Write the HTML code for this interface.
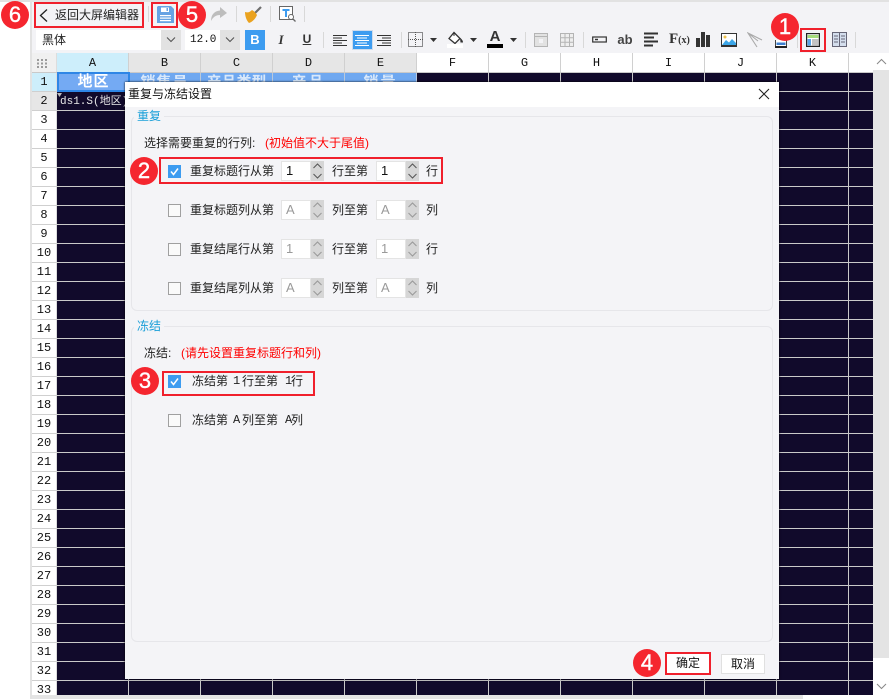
<!DOCTYPE html>
<html lang="zh">
<head>
<meta charset="utf-8">
<title>重复与冻结设置</title>
<style>
html,body{margin:0;padding:0;width:889px;height:699px;overflow:hidden;background:#fff}
body{position:relative;font-family:"Liberation Sans","Noto Sans CJK SC",sans-serif;font-size:12px;color:#222}
.a,.t,.box,.badge,.sep,.cb,.inp,.spin,.h,.r{position:absolute}
.t{white-space:nowrap;line-height:18px;height:18px}
.box{border:2px solid #f0202c;box-sizing:border-box}
.badge{width:28px;height:28px;border-radius:50%;background:#f5262f;color:#fff;text-align:center;font:22px/28px "Liberation Sans",sans-serif;-webkit-text-stroke:.4px #fff}
.sep{width:1px;background:#d8d8d8;height:16px}
.h{top:53px;height:19px;width:71px;border-right:1px solid #d0d0d0;font:12px/20px "Liberation Mono",monospace;text-align:center;color:#111;background:#fff}
.g{background:#e6e6e6}
.r{left:32px;width:24px;height:18px;border-bottom:1px solid #cfcfcf;border-right:1px solid #ddd;font:12px/19px "Liberation Mono",monospace;text-align:center;background:#fff;color:#111}
.cb{left:168px;width:11px;height:11px;border:1px solid #a0a0a0;background:#fafafa}
.cb.on{width:13px;height:13px;border:0;background:#3d9cf0}
.inp{width:30px;height:20px;background:#fff;border:1px solid #e4e4e4;box-sizing:border-box;font:13px/18px "Liberation Sans",sans-serif;padding-left:4px;color:#111}
.dis{color:#9a9a9a}
.spin{width:13px;height:20px;background:#d6d6d6}
.mono{font-family:"Liberation Mono",monospace;font-size:12px}
</style>
</head>
<body>
<div class="a" style="left:0;top:0;width:889px;height:2px;background:#e2e2e2"></div>
<div class="a" style="left:30px;top:0;width:2px;height:699px;background:#e2e2e2"></div>
<div class="a" style="left:32px;top:2px;width:857px;height:51px;background:#f3f3f6"></div>

<!-- top toolbar -->
<svg class="a" style="left:38px;top:8px" width="11" height="15" viewBox="0 0 11 15"><path d="M9 1.500 L2.500 7.500 L9 13.500" fill="none" stroke="#222" stroke-width="1.300"/></svg>
<div class="t" style="left:55px;top:6px;font-size:12px;letter-spacing:0">返回大屏编辑器</div>
<div class="sep" style="left:148px;top:6px"></div>
<svg class="a" style="left:157px;top:6px" width="17" height="17" viewBox="0 0 17 17"><path d="M1 0H14L17 3V17H0V1Z" fill="#66a3e3"/><rect x="4" y="1.500" width="8" height="4.500" fill="#fff"/><rect x="9.500" y="2" width="1.500" height="3" fill="#66a3e3"/><rect x="3" y="9" width="11" height="1.200" fill="#fff"/><rect x="3" y="11.500" width="11" height="1.200" fill="#fff"/><rect x="3" y="14" width="11" height="1.200" fill="#fff"/></svg>
<svg class="a" style="left:210px;top:7px" width="17" height="15" viewBox="0 0 17 15"><path d="M10 0L17 6L10 11V8C6 8 3 10 1 14C1 8 4 4 10 3.500Z" fill="#bdbdbd"/></svg>
<div class="sep" style="left:236px;top:6px"></div>
<svg class="a" style="left:244px;top:5px" width="18" height="18" viewBox="0 0 18 18"><path d="M17 2L11 8" stroke="#6f6f6f" stroke-width="2.200"/><path d="M8 5C10 6 12 8 13 10C11 15 7 17.500 5 18C3 16 1 12 1 7C4 8 6 7 8 5Z" fill="#eaa21f"/></svg>
<div class="sep" style="left:270px;top:6px"></div>
<svg class="a" style="left:279px;top:6px" width="17" height="16" viewBox="0 0 17 16"><rect x=".5" y=".5" width="13" height="13" fill="#fff" stroke="#666"/><path d="M3.500 3H10.500V5H8V11H6V5H3.500Z" fill="#3d9cf0"/><circle cx="12" cy="11" r="2.500" fill="#fff" stroke="#666"/><path d="M14 13L16.500 15.500" stroke="#666" stroke-width="1.300"/></svg>
<div class="sep" style="left:304px;top:6px"></div>

<!-- second toolbar -->
<div class="a" style="left:36px;top:30px;width:125px;height:20px;background:#fff"></div>
<div class="t" style="left:42px;top:31px;font-size:12px">黑体</div>
<div class="a" style="left:161px;top:30px;width:20px;height:20px;background:#e2e2e2"></div>
<svg class="a" style="left:165px;top:36px" width="12" height="8" viewBox="0 0 12 8"><path d="M2 1.500L6 5.500L10 1.500" fill="none" stroke="#555" stroke-width="1.100"/></svg>
<div class="a" style="left:185px;top:30px;width:35px;height:20px;background:#fff"></div>
<div class="t" style="left:190px;top:31px;font:11px/18px 'Liberation Mono',monospace;color:#111">12.0</div>
<div class="a" style="left:220px;top:30px;width:20px;height:20px;background:#e2e2e2"></div>
<svg class="a" style="left:224px;top:36px" width="12" height="8" viewBox="0 0 12 8"><path d="M2 1.500L6 5.500L10 1.500" fill="none" stroke="#555" stroke-width="1.100"/></svg>
<div class="a" style="left:245px;top:30px;width:20px;height:20px;background:#3d9cf0;color:#fff;text-align:center;font:bold 13px/20px 'Liberation Sans',sans-serif">B</div>
<div class="a" style="left:274px;top:30px;width:14px;height:20px;color:#333;text-align:center;font:italic bold 13px/20px 'Liberation Serif',serif">I</div>
<div class="a" style="left:300px;top:30px;width:14px;height:18px;color:#333;text-align:center;font:bold 12px/18px 'Liberation Sans',sans-serif;text-decoration:underline">U</div>
<div class="sep" style="left:323px;top:32px"></div>

<svg class="a" style="left:333px;top:35px" width="14" height="11" viewBox="0 0 14 11"><path d="M0 .5H14M0 3H9M0 5.500H14M0 8H9M0 10.500H14" stroke="#333" stroke-width="1"/></svg>
<div class="a" style="left:352px;top:30px;width:21px;height:20px;background:#3d9cf0;border:1px solid #cfdcec;box-sizing:border-box"></div>
<svg class="a" style="left:355px;top:35px" width="14" height="11" viewBox="0 0 14 11"><path d="M0 .5H14M2 3H12M0 5.500H14M2 8H12M0 10.500H14" stroke="#fff" stroke-width="1"/></svg>
<svg class="a" style="left:377px;top:35px" width="14" height="11" viewBox="0 0 14 11"><path d="M0 .5H14M5 3H14M0 5.500H14M5 8H14M0 10.500H14" stroke="#333" stroke-width="1"/></svg>
<div class="sep" style="left:401px;top:32px"></div>
<svg class="a" style="left:408px;top:32px" width="15" height="15" viewBox="0 0 15 15" shape-rendering="crispEdges"><rect x=".5" y=".5" width="14" height="14" fill="none" stroke="#222" stroke-dasharray="1 1"/><path d="M7.500 0V15M0 7.500H15" stroke="#555" stroke-dasharray="1 1"/></svg>
<svg class="a" style="left:430px;top:38px" width="7" height="4" viewBox="0 0 7 4"><path d="M0 0H7L3.500 4Z" fill="#333"/></svg>
<svg class="a" style="left:447px;top:31px" width="17" height="17" viewBox="0 0 17 17"><path d="M7 1.500L13 7.500L8 12.500L2 7.500Z" fill="#fff" stroke="#333" stroke-width="1.300"/><path d="M7 1V5" stroke="#333"/><path d="M13 7C15 8 16 10 16 11.500L13.500 11.500Z" fill="#333"/><rect x="0" y="13" width="16" height="4" fill="#fff"/></svg>
<svg class="a" style="left:470px;top:38px" width="7" height="4" viewBox="0 0 7 4"><path d="M0 0H7L3.500 4Z" fill="#333"/></svg>
<div class="a" style="left:487px;top:29px;width:16px;height:15px;text-align:center;font:bold 15px/16px 'Liberation Sans',sans-serif;color:#333">A</div>
<div class="a" style="left:487px;top:44px;width:16px;height:4px;background:#000"></div>
<svg class="a" style="left:510px;top:38px" width="7" height="4" viewBox="0 0 7 4"><path d="M0 0H7L3.500 4Z" fill="#333"/></svg>
<div class="sep" style="left:525px;top:32px"></div>
<svg class="a" style="left:534px;top:33px" width="14" height="14" viewBox="0 0 14 14"><rect x=".5" y=".5" width="13" height="13" fill="#e2e2e2" stroke="#b4b4b4"/><path d="M.5 3.500H13.500" stroke="#b4b4b4"/><rect x="5" y="6" width="4" height="4" fill="#f3f3f6"/></svg>
<svg class="a" style="left:560px;top:33px" width="14" height="14" viewBox="0 0 14 14"><path d="M.5.500H13.500V13.500H.5ZM.5 4.800H13.500M.5 9.200H13.500M5 .5V13.500M9.500.5V13.500" fill="#eee" stroke="#b4b4b4"/></svg>
<div class="sep" style="left:583px;top:32px"></div>
<svg class="a" style="left:592px;top:36px" width="15" height="7" viewBox="0 0 15 7"><rect x=".7" y="1" width="13.600" height="5" fill="none" stroke="#333" stroke-width="1.200"/><path d="M3 3.500H6" stroke="#333" stroke-width="1.500"/></svg>
<div class="a" style="left:615px;top:31px;width:20px;text-align:center;font:bold 13px/18px 'Liberation Sans',sans-serif;color:#444">ab</div>
<svg class="a" style="left:644px;top:32px" width="15" height="15" viewBox="0 0 15 15"><path d="M0 1.500H14M0 5.500H10M0 9.500H14M0 13.500H9" stroke="#333" stroke-width="2"/></svg>
<div class="a" style="left:669px;top:30px;width:20px;font:bold 15px/19px 'Liberation Serif',serif;color:#333;white-space:nowrap">F<span style="font-size:10px">(x)</span></div>
<svg class="a" style="left:696px;top:32px" width="14" height="15" viewBox="0 0 14 15"><path d="M0 6H4V15H0ZM5 0H9V15H5ZM10 3H14V15H10Z" fill="#333"/></svg>
<svg class="a" style="left:721px;top:33px" width="16" height="14" viewBox="0 0 16 14"><rect x=".5" y=".5" width="15" height="13" fill="#fff" stroke="#333"/><rect x="0" y="12" width="16" height="2" fill="#333"/><circle cx="4" cy="4" r="1.500" fill="#eec24b"/><path d="M1 12L5 7L8 9.500L11 6L15 10V12Z" fill="#3ca6e8"/></svg>
<svg class="a" style="left:747px;top:32px" width="16" height="16" viewBox="0 0 16 16"><path d="M15 8L1 1L10 15M1 1L11 9" fill="none" stroke="#aaa" stroke-width="1.100"/></svg>
<svg class="a" style="left:775px;top:40px" width="12" height="8" viewBox="0 0 12 8"><rect x=".5" y="-1" width="11" height="8.500" fill="#fff" stroke="#444"/><rect x="1.500" y="2.500" width="9" height="2.500" fill="#3d7fd0"/><rect x="0" y="6" width="12" height="2" fill="#222"/></svg>
<div class="sep" style="left:797px;top:32px"></div>
<svg class="a" style="left:806px;top:33px" width="14" height="14" viewBox="0 0 14 14"><rect x=".6" y=".6" width="12.800" height="12.800" fill="#fff" stroke="#222" stroke-width="1.200"/><rect x="1.500" y="2" width="11" height="3" fill="#a5dc7c"/><rect x="1.500" y="6" width="3.500" height="6.500" fill="#5aa5e8"/><rect x="6" y="6" width="6.500" height="6.500" fill="#c4c4c4"/></svg>
<svg class="a" style="left:832px;top:32px" width="15" height="15" viewBox="0 0 15 15"><rect x=".5" y=".5" width="14" height="14" fill="#d4deed" stroke="#667"/><path d="M7.500 .5V14.500M2 4H6M2 7H6M2 10H6M9 4H13M9 7H13M9 10H13" stroke="#667"/></svg>
<div class="sep" style="left:855px;top:32px"></div>

<!-- sheet -->
<svg class="a" style="left:57px;top:72px" width="816" height="627" viewBox="0 0 816 627" shape-rendering="crispEdges"><rect width="816" height="627" fill="#110a2b"/><path d="M0 .5H816M0 19.500H816M0 38.500H816M0 57.500H816M0 76.500H816M0 95.500H816M0 114.500H816M0 133.500H816M0 152.500H816M0 171.500H816M0 190.500H816M0 209.500H816M0 228.500H816M0 247.500H816M0 266.500H816M0 285.500H816M0 304.500H816M0 323.500H816M0 342.500H816M0 361.500H816M0 380.500H816M0 399.500H816M0 418.500H816M0 437.500H816M0 456.500H816M0 475.500H816M0 494.500H816M0 513.500H816M0 532.500H816M0 551.500H816M0 570.500H816M0 589.500H816M0 608.500H816M71.500 0V627M143.500 0V627M215.500 0V627M287.500 0V627M359.500 0V627M431.500 0V627M503.500 0V627M575.500 0V627M647.500 0V627M719.500 0V627M791.500 0V627" stroke="#c9c9c9" stroke-width="1" fill="none"/></svg>
<div class="a" style="left:32px;top:72px;width:841px;height:1px;background:#c9c9c9"></div>

<div class="a" style="left:32px;top:53px;width:25px;height:19px;background:#f0f0f0;border-right:1px solid #ddd;box-sizing:border-box"></div>
<svg class="a" style="left:37px;top:59px" width="11" height="9" viewBox="0 0 11 9"><path d="M0 0h2v2H0zM4 0h2v2H4zM8 0h2v2H8zM0 3.500h2v2H0zM4 3.500h2v2H4zM8 3.500h2v2H8zM0 7h2v2H0zM4 7h2v2H4zM8 7h2v2H8z" fill="#9a9a9a"/></svg>

<div class="h" style="left:57px;background:#cdeefb">A</div>
<div class="h g" style="left:129px">B</div>
<div class="h g" style="left:201px">C</div>
<div class="h g" style="left:273px">D</div>
<div class="h g" style="left:345px">E</div>
<div class="h" style="left:417px">F</div>
<div class="h" style="left:489px">G</div>
<div class="h" style="left:561px">H</div>
<div class="h" style="left:633px">I</div>
<div class="h" style="left:705px">J</div>
<div class="h" style="left:777px">K</div>

<div class="r" style="top:73px;background:#cdeefb">1</div>
<div class="r" style="top:92px;background:#e6e6e6">2</div>
<div class="r" style="top:111px">3</div>
<div class="r" style="top:130px">4</div>
<div class="r" style="top:149px">5</div>
<div class="r" style="top:168px">6</div>
<div class="r" style="top:187px">7</div>
<div class="r" style="top:206px">8</div>
<div class="r" style="top:225px">9</div>
<div class="r" style="top:244px">10</div>
<div class="r" style="top:263px">11</div>
<div class="r" style="top:282px">12</div>
<div class="r" style="top:301px">13</div>
<div class="r" style="top:320px">14</div>
<div class="r" style="top:339px">15</div>
<div class="r" style="top:358px">16</div>
<div class="r" style="top:377px">17</div>
<div class="r" style="top:396px">18</div>
<div class="r" style="top:415px">19</div>
<div class="r" style="top:434px">20</div>
<div class="r" style="top:453px">21</div>
<div class="r" style="top:472px">22</div>
<div class="r" style="top:491px">23</div>
<div class="r" style="top:510px">24</div>
<div class="r" style="top:529px">25</div>
<div class="r" style="top:548px">26</div>
<div class="r" style="top:567px">27</div>
<div class="r" style="top:586px">28</div>
<div class="r" style="top:605px">29</div>
<div class="r" style="top:624px">30</div>
<div class="r" style="top:643px">31</div>
<div class="r" style="top:662px">32</div>
<div class="r" style="top:681px">33</div>

<!-- row 1 cells -->
<div class="a" style="left:129px;top:73px;width:288px;height:18px;background:#6fa8f0;background-image:repeating-linear-gradient(to right,transparent 0,transparent 71px,#b9c9dc 71px,#b9c9dc 72px)"></div>
<div class="t" style="left:129px;top:73px;width:71px;text-align:center;color:#d8e8fb;font:bold 15px/20px 'Liberation Sans','Noto Sans CJK SC',sans-serif;letter-spacing:1px">销售员</div>
<div class="t" style="left:201px;top:73px;width:71px;text-align:center;color:#d8e8fb;font:bold 15px/20px 'Liberation Sans','Noto Sans CJK SC',sans-serif">产品类型</div>
<div class="t" style="left:273px;top:73px;width:71px;text-align:center;color:#d8e8fb;font:bold 15px/20px 'Liberation Sans','Noto Sans CJK SC',sans-serif;letter-spacing:2px">产品</div>
<div class="t" style="left:345px;top:73px;width:71px;text-align:center;color:#d8e8fb;font:bold 15px/20px 'Liberation Sans','Noto Sans CJK SC',sans-serif;letter-spacing:2px">销量</div>
<div class="a" style="left:57px;top:72px;width:73px;height:20px;background:#74aaf3;border:2px solid #2e86e6;box-sizing:border-box;color:#fff;text-align:center;font:bold 15px/16px 'Liberation Sans','Noto Sans CJK SC',sans-serif;letter-spacing:1px">地区</div>
<div class="t" style="left:60px;top:93px;color:#e8e8e8;font:11px/18px 'Liberation Mono','Noto Sans CJK SC',monospace">ds1.S(地区)</div>
<svg class="a" style="left:57px;top:93px" width="5" height="5" viewBox="0 0 5 5"><path d="M0 0H5L2.500 4Z" fill="#bbb"/></svg>

<!-- scrollbars -->
<div class="a" style="left:873px;top:53px;width:16px;height:646px;background:#fff"></div>
<div class="a" style="left:873px;top:70px;width:16px;height:588px;background:#e4e4e4"></div>
<svg class="a" style="left:876px;top:58px" width="11" height="7" viewBox="0 0 11 7"><path d="M1 6L5.500 1.500L10 6" fill="none" stroke="#888"/></svg>
<svg class="a" style="left:876px;top:683px" width="11" height="7" viewBox="0 0 11 7"><path d="M1 1L5.500 5.500L10 1" fill="none" stroke="#888"/></svg>
<div class="a" style="left:57px;top:695px;width:816px;height:4px;background:#fff"></div>
<div class="a" style="left:32px;top:695px;width:771px;height:4px;background:#e4e4e4"></div>

<!-- dialog -->
<div class="a" style="left:125px;top:82px;width:654px;height:597px;background:#f4f4f7;box-shadow:0 0 2px #000"></div>
<div class="a" style="left:125px;top:82px;width:654px;height:25px;background:#fff"></div>
<div class="t" style="left:128px;top:85px;font-size:12px;color:#111">重复与冻结设置</div>
<svg class="a" style="left:758px;top:88px" width="12" height="12" viewBox="0 0 12 12"><path d="M1 1L11 11M11 1L1 11" stroke="#222" stroke-width="1.100"/></svg>

<div class="a" style="left:131px;top:116px;width:642px;height:195px;border:1px solid #e6e6ea;border-radius:6px;box-sizing:border-box"></div>
<div class="t" style="left:134px;top:107px;padding:0 3px;background:#f4f4f7;color:#1a9fd8">重复</div>
<div class="t" style="left:144px;top:134px">选择需要重复的行列:</div>
<div class="t" style="left:265px;top:134px;color:#f00">(初始值不大于尾值)</div>

<!-- row 1 -->
<div class="cb on" style="top:165px"></div>
<svg class="a" style="left:168px;top:165px" width="13" height="13" viewBox="0 0 13 13"><path d="M3 6.500L5.500 9.500L10 3.500" fill="none" stroke="#fff" stroke-width="1.500"/></svg>
<div class="t" style="left:190px;top:162px">重复标题行从第</div>
<div class="inp" style="left:281px;top:161px">1</div>
<div class="spin" style="left:311px;top:161px"></div>
<svg class="a" style="left:311px;top:161px" width="13" height="20" viewBox="0 0 13 20"><path d="M2.500 7L6.500 3L10.500 7M2.500 13L6.500 17L10.500 13" fill="none" stroke="#555"/></svg>
<div class="t" style="left:332px;top:162px">行至第</div>
<div class="inp" style="left:376px;top:161px">1</div>
<div class="spin" style="left:406px;top:161px"></div>
<svg class="a" style="left:406px;top:161px" width="13" height="20" viewBox="0 0 13 20"><path d="M2.500 7L6.500 3L10.500 7M2.500 13L6.500 17L10.500 13" fill="none" stroke="#555"/></svg>
<div class="t" style="left:426px;top:162px">行</div>

<!-- row 2 -->
<div class="cb" style="top:204px"></div>
<div class="t" style="left:190px;top:201px">重复标题列从第</div>
<div class="inp dis" style="left:281px;top:200px">A</div>
<div class="spin" style="left:311px;top:200px"></div>
<svg class="a" style="left:311px;top:200px" width="13" height="20" viewBox="0 0 13 20"><path d="M2.500 7L6.500 3L10.500 7M2.500 13L6.500 17L10.500 13" fill="none" stroke="#999"/></svg>
<div class="t" style="left:332px;top:201px">列至第</div>
<div class="inp dis" style="left:376px;top:200px">A</div>
<div class="spin" style="left:406px;top:200px"></div>
<svg class="a" style="left:406px;top:200px" width="13" height="20" viewBox="0 0 13 20"><path d="M2.500 7L6.500 3L10.500 7M2.500 13L6.500 17L10.500 13" fill="none" stroke="#999"/></svg>
<div class="t" style="left:426px;top:201px">列</div>

<!-- row 3 -->
<div class="cb" style="top:243px"></div>
<div class="t" style="left:190px;top:240px">重复结尾行从第</div>
<div class="inp dis" style="left:281px;top:239px">1</div>
<div class="spin" style="left:311px;top:239px"></div>
<svg class="a" style="left:311px;top:239px" width="13" height="20" viewBox="0 0 13 20"><path d="M2.500 7L6.500 3L10.500 7M2.500 13L6.500 17L10.500 13" fill="none" stroke="#999"/></svg>
<div class="t" style="left:332px;top:240px">行至第</div>
<div class="inp dis" style="left:376px;top:239px">1</div>
<div class="spin" style="left:406px;top:239px"></div>
<svg class="a" style="left:406px;top:239px" width="13" height="20" viewBox="0 0 13 20"><path d="M2.500 7L6.500 3L10.500 7M2.500 13L6.500 17L10.500 13" fill="none" stroke="#999"/></svg>
<div class="t" style="left:426px;top:240px">行</div>

<!-- row 4 -->
<div class="cb" style="top:282px"></div>
<div class="t" style="left:190px;top:279px">重复结尾列从第</div>
<div class="inp dis" style="left:281px;top:278px">A</div>
<div class="spin" style="left:311px;top:278px"></div>
<svg class="a" style="left:311px;top:278px" width="13" height="20" viewBox="0 0 13 20"><path d="M2.500 7L6.500 3L10.500 7M2.500 13L6.500 17L10.500 13" fill="none" stroke="#999"/></svg>
<div class="t" style="left:332px;top:279px">列至第</div>
<div class="inp dis" style="left:376px;top:278px">A</div>
<div class="spin" style="left:406px;top:278px"></div>
<svg class="a" style="left:406px;top:278px" width="13" height="20" viewBox="0 0 13 20"><path d="M2.500 7L6.500 3L10.500 7M2.500 13L6.500 17L10.500 13" fill="none" stroke="#999"/></svg>
<div class="t" style="left:426px;top:279px">列</div>

<!-- freeze -->
<div class="a" style="left:131px;top:326px;width:642px;height:316px;border:1px solid #e6e6ea;border-radius:6px;box-sizing:border-box"></div>
<div class="t" style="left:134px;top:317px;padding:0 3px;background:#f4f4f7;color:#1a9fd8">冻结</div>
<div class="t" style="left:144px;top:344px">冻结:</div>
<div class="t" style="left:181px;top:344px;color:#f00">(请先设置重复标题行和列)</div>
<div class="cb on" style="top:375px"></div>
<svg class="a" style="left:168px;top:375px" width="13" height="13" viewBox="0 0 13 13"><path d="M3 6.500L5.500 9.500L10 3.500" fill="none" stroke="#fff" stroke-width="1.500"/></svg>
<div class="t" style="left:192px;top:372px">冻结第</div>
<div class="t mono" style="left:233px;top:372px">1</div>
<div class="t" style="left:242px;top:372px">行至第</div>
<div class="t mono" style="left:285px;top:372px">1</div>
<div class="t" style="left:291px;top:372px">行</div>
<div class="cb" style="top:414px"></div>
<div class="t" style="left:192px;top:411px">冻结第</div>
<div class="t mono" style="left:233px;top:411px">A</div>
<div class="t" style="left:242px;top:411px">列至第</div>
<div class="t mono" style="left:285px;top:411px">A</div>
<div class="t" style="left:291px;top:411px">列</div>

<!-- buttons -->
<div class="a" style="left:667px;top:654px;width:42px;height:19px;background:#fff;text-align:center;line-height:19px;color:#111">确定</div>
<div class="a" style="left:721px;top:654px;width:44px;height:20px;background:#fff;border:1px solid #e0e0e0;box-sizing:border-box;text-align:center;line-height:18px;color:#111">取消</div>

<!-- annotations -->
<div class="box" style="left:800px;top:28px;width:26px;height:24px"></div>
<div class="box" style="left:34px;top:2px;width:110px;height:26px"></div>
<div class="box" style="left:151px;top:2px;width:27px;height:26px"></div>
<div class="box" style="left:159px;top:157px;width:284px;height:27px"></div>
<div class="box" style="left:162px;top:371px;width:153px;height:25px"></div>
<div class="box" style="left:665px;top:652px;width:46px;height:23px"></div>
<div class="badge" style="left:771px;top:13px">1</div>
<div class="badge" style="left:130px;top:157px">2</div>
<div class="badge" style="left:131px;top:367px">3</div>
<div class="badge" style="left:633px;top:649px">4</div>
<div class="badge" style="left:178px;top:1px">5</div>
<div class="badge" style="left:1px;top:1px">6</div>
</body>
</html>
